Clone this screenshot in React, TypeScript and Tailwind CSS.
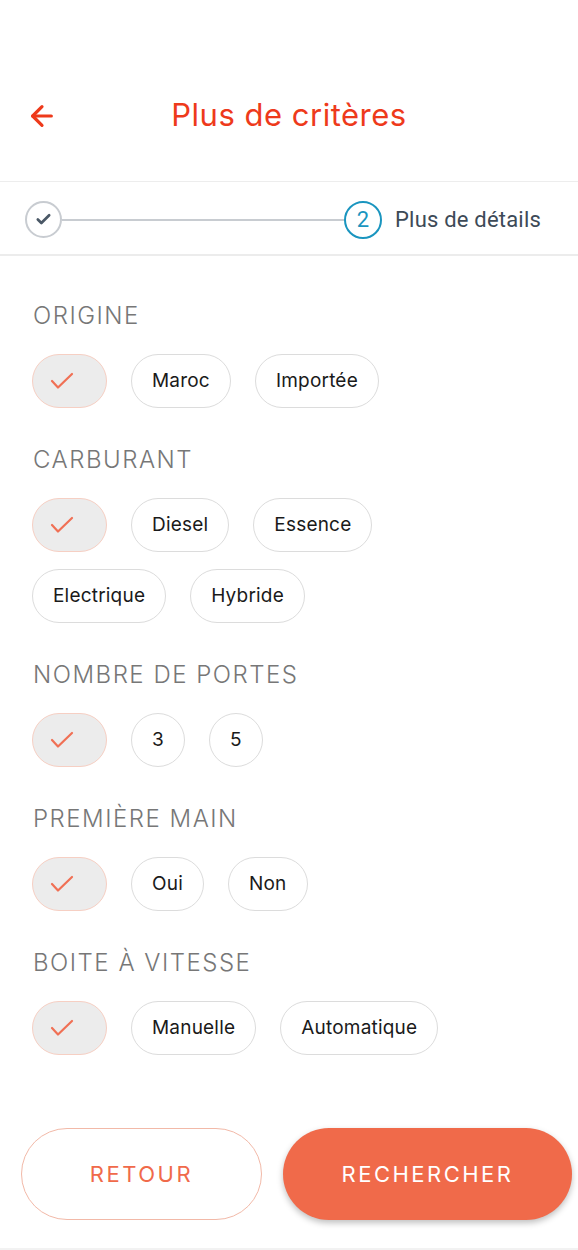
import { ArrowLeft, Check } from "lucide-react";

interface Section {
  title: string;
  rows: string[][];
}

const sections: Section[] = [
  { title: "ORIGINE", rows: [["Maroc", "Importée"]] },
  { title: "CARBURANT", rows: [["Diesel", "Essence"], ["Electrique", "Hybride"]] },
  { title: "NOMBRE DE PORTES", rows: [["3", "5"]] },
  { title: "PREMIÈRE MAIN", rows: [["Oui", "Non"]] },
  { title: "BOITE À VITESSE", rows: [["Manuelle", "Automatique"]] },
];

const Chip = ({ label }: { label: string }) => (
  <div className="h-[54px] min-w-[53px] px-5 flex items-center justify-center rounded-full border border-[#dcdcdc] bg-white text-[19px] text-[#1a1a1a] tracking-[0.2px]">
    {label}
  </div>
);

const AllChip = () => (
  <div className="h-[54px] w-[75px] flex items-center pl-[17px] rounded-full border border-[#f6cfc3] bg-[#ececec]">
    <svg width="24" height="18" viewBox="0 0 24 18" fill="none">
      <polyline
        points="2,9 8,15.5 22,2"
        stroke="#f07055"
        strokeWidth="2.2"
        strokeLinecap="round"
        strokeLinejoin="round"
      />
    </svg>
  </div>
);

const App = () => {
  return (
    <div className="w-[578px] h-[1250px] bg-white flex flex-col font-['Inter',sans-serif]">
      {/* Header */}
      <div className="h-[182px] flex items-start pt-[94px] relative border-b border-[#ededed]">
        <ArrowLeft size={32} strokeWidth={2.4} className="text-[#ee3a1b] ml-[26px] mt-[6px]" />
        <h1 className="absolute left-0 right-0 top-[95px] text-center text-[31px] leading-[40px] text-[#ee3a1b] tracking-[0.5px]">
          Plus de critères
        </h1>
      </div>

      {/* Stepper */}
      <div className="h-[74px] flex items-center pt-[3px] pl-[25px] border-b-2 border-[#ececec] font-['Roboto',sans-serif]">
        <div className="w-[37px] h-[37px] rounded-full border-2 border-[#c8ccd1] flex items-center justify-center">
          <Check size={17} strokeWidth={3.8} className="text-[#4a5866]" />
        </div>
        <div className="w-[282px] h-[2px] bg-[#c8ccd1]" />
        <div className="w-[38px] h-[38px] rounded-full border-2 border-[#1a95bf] flex items-center justify-center text-[22px] text-[#1a95bf]">
          2
        </div>
        <span className="ml-[13px] text-[22px] text-[#3d4a57] tracking-[0.2px]">Plus de détails</span>
      </div>

      {/* Filters */}
      <div className="flex flex-col px-[32px] pt-[45px] gap-[37px]">
        {sections.map((section, index) => (
          <div key={index} className="flex flex-col">
            <h3 className="text-[24px] leading-[30px] font-light text-[#777777] ml-[1px] mb-[23px] tracking-[1.5px]">
              {section.title}
            </h3>
            <div className="flex flex-col gap-[17px]">
              {section.rows.map((row, i) => (
                <div key={i} className="flex gap-[24px]">
                  {i === 0 && <AllChip />}
                  {row.map((option) => (
                    <Chip key={option} label={option} />
                  ))}
                </div>
              ))}
            </div>
          </div>
        ))}
      </div>

      {/* Buttons */}
      <div className="mt-auto flex gap-[21px] px-[21px] pb-[28px] border-b-2 border-[#f2f2f2]">
        <button className="w-[241px] h-[92px] rounded-[46px] border border-[#f2b9a8] bg-white text-[22px] tracking-[2.5px] text-[#f06a4a]">
          RETOUR
        </button>
        <button className="flex-1 mr-[-15px] h-[92px] rounded-[46px] bg-[#f06a4a] text-[22px] tracking-[2.5px] text-white shadow-[0_3px_6px_rgba(0,0,0,0.25)]">
          RECHERCHER
        </button>
      </div>
    </div>
  );
};

export default App;
